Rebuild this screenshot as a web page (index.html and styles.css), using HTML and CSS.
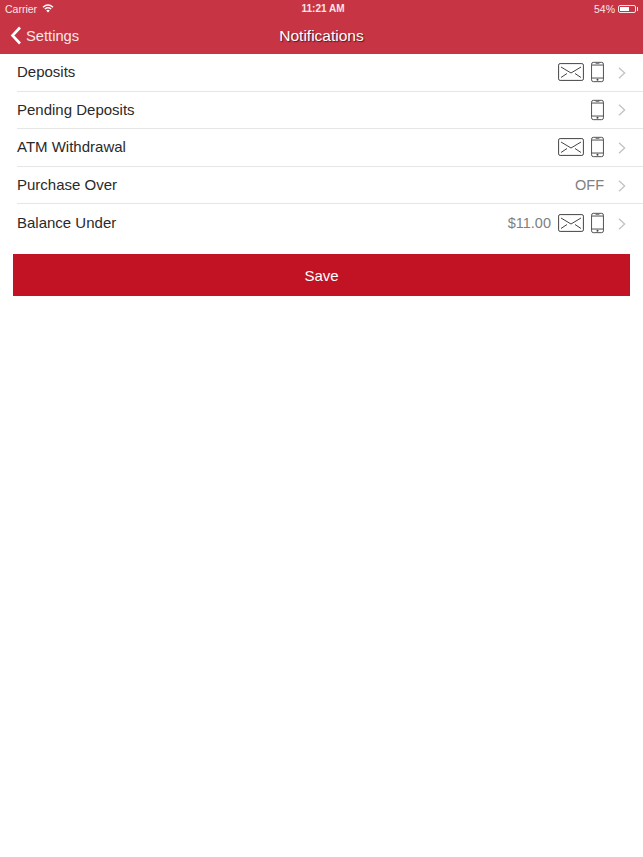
FILE: index.html
```html
<!DOCTYPE html>
<html lang="en">
<head>
    <meta charset="UTF-8">
    <meta name="viewport" content="width=device-width, initial-scale=1.0">
    <title>Notifications</title>
    <link rel="stylesheet" href="styles.css">
</head>
<body>
    <svg class="defs" width="0" height="0">
        <symbol id="mail" viewBox="0 0 26 18">
            <rect x="0.6" y="0.6" width="24.8" height="16.8" rx="1.5" fill="none" stroke="#444" stroke-width="1"/>
            <path d="M3 4L13 10L23 4M3 14.5L9 10.5M23 14.5L17 10.5" fill="none" stroke="#444" stroke-width="1"/>
        </symbol>
        <symbol id="phone" viewBox="0 0 14 22">
            <rect x="0.6" y="0.6" width="12.8" height="20.8" rx="2" fill="none" stroke="#444" stroke-width="1"/>
            <path d="M1 3.5H13M1 17.5H13" fill="none" stroke="#444" stroke-width="1"/>
            <path d="M5 1.9H9" stroke="#777" stroke-width="1"/>
            <circle cx="7" cy="19.4" r="1.1" fill="#444"/>
        </symbol>
        <symbol id="chevron" viewBox="0 0 8 12">
            <path d="M1 0.8L6.6 6L1 11.2" fill="none" stroke="#c4c4c4" stroke-width="1.4"/>
        </symbol>
    </svg>

    <header class="topbar">
        <div class="status">
            <span class="status-left">Carrier
                <svg class="wifi" width="12" height="9" viewBox="0 0 12 9">
                    <path d="M1 3.2C4 .6 8 .6 11 3.2M2.8 5C4.8 3.4 7.2 3.4 9.2 5" fill="none" stroke="#fff" stroke-width="1.4"/>
                    <path d="M4.2 6.4L6 8.4L7.8 6.4C6.6 5.4 5.4 5.4 4.2 6.4Z" fill="#fff"/>
                </svg>
            </span>
            <span class="status-time">11:21 AM</span>
            <span class="status-right">54%
                <span class="battery"><span class="battery-fill"></span></span>
            </span>
        </div>
        <div class="navbar">
            <a class="back" href="#">
                <svg width="12" height="19" viewBox="0 0 12 19">
                    <path d="M10 1.5L2.5 9.5L10 17.5" fill="none" stroke="#fff" stroke-width="2.6"/>
                </svg>
                Settings
            </a>
            <h1 class="title">Notifications</h1>
        </div>
    </header>

    <ul class="list">
        <li class="row">
            <span class="label">Deposits</span>
            <svg class="ic-mail"><use href="#mail"/></svg>
            <svg class="ic-phone"><use href="#phone"/></svg>
            <svg class="ic-chevron"><use href="#chevron"/></svg>
        </li>
        <li class="row">
            <span class="label">Pending Deposits</span>
            <svg class="ic-phone"><use href="#phone"/></svg>
            <svg class="ic-chevron"><use href="#chevron"/></svg>
        </li>
        <li class="row">
            <span class="label">ATM Withdrawal</span>
            <svg class="ic-mail"><use href="#mail"/></svg>
            <svg class="ic-phone"><use href="#phone"/></svg>
            <svg class="ic-chevron"><use href="#chevron"/></svg>
        </li>
        <li class="row">
            <span class="label">Purchase Over</span>
            <span class="value">OFF</span>
            <svg class="ic-chevron"><use href="#chevron"/></svg>
        </li>
        <li class="row">
            <span class="label">Balance Under</span>
            <span class="value">$11.00</span>
            <svg class="ic-mail"><use href="#mail"/></svg>
            <svg class="ic-phone"><use href="#phone"/></svg>
            <svg class="ic-chevron"><use href="#chevron"/></svg>
        </li>
    </ul>

    <button class="save">Save</button>
</body>
</html>
```

FILE: styles.css
```css
body {
    font-family: "Liberation Sans", Arial, sans-serif;
    margin: 0;
    background-color: #fff;
    color: #2a2a2a;
}
.defs {
    position: absolute;
}
.topbar {
    background-color: #c73443;
    color: #fff;
    height: 54px;
}
.status {
    display: grid;
    grid-template-columns: 1fr auto 1fr;
    align-items: center;
    height: 17px;
    padding: 0 5px;
    font-size: 10.5px;
    color: #fbe6e8;
}
.status-left {
    display: flex;
    align-items: center;
    gap: 5px;
}
.status-time {
    font-size: 10px;
    font-weight: bold;
    margin-left: 3px;
}
.status-right {
    display: flex;
    align-items: center;
    justify-content: flex-end;
    gap: 3px;
}
.battery {
    position: relative;
    width: 18px;
    height: 8px;
    margin-right: 2px;
    border: 1px solid #fbe6e8;
    border-radius: 2px;
    padding: 1px;
    box-sizing: border-box;
    display: flex;
}
.battery::after {
    content: "";
    position: absolute;
    right: -3px;
    top: 1px;
    width: 1px;
    height: 4px;
    background-color: #fbe6e8;
}
.battery-fill {
    width: 62%;
    background-color: #fff;
}
.navbar {
    position: relative;
    display: flex;
    align-items: center;
    justify-content: center;
    height: 37px;
}
.back {
    position: absolute;
    left: 10px;
    top: 0;
    height: 37px;
    display: flex;
    align-items: center;
    gap: 4px;
    color: #fbe6e8;
    font-size: 14.7px;
    text-decoration: none;
}
.title {
    margin: 0;
    font-size: 15.5px;
    font-weight: normal;
    color: #fff;
    text-shadow: 1px 1px 1px #5a1a22;
}
.list {
    list-style: none;
    margin: 0;
    padding: 0 0 0 17px;
}
.row {
    display: flex;
    align-items: center;
    box-sizing: border-box;
    height: 37.6px;
    padding-right: 17px;
    border-bottom: 1px solid #e6e6e6;
}
.row:last-child {
    border-bottom: none;
}
.label {
    flex: 1;
    font-size: 15px;
    padding-bottom: 1px;
}
.value {
    font-size: 14.5px;
    color: #808080;
    padding-bottom: 1px;
}
.ic-mail {
    width: 26px;
    height: 18px;
    margin-left: 7px;
}
.ic-phone {
    width: 13px;
    height: 22px;
    margin-left: 7px;
}
.ic-chevron {
    width: 8px;
    height: 12px;
    margin: 1px 0 0 14px;
}
.save {
    display: block;
    width: 617px;
    height: 42px;
    margin: 12px 0 0 13px;
    padding-top: 3px;
    border: none;
    background-color: #c11323;
    color: #fff;
    font-family: inherit;
    font-size: 15px;
}
```
